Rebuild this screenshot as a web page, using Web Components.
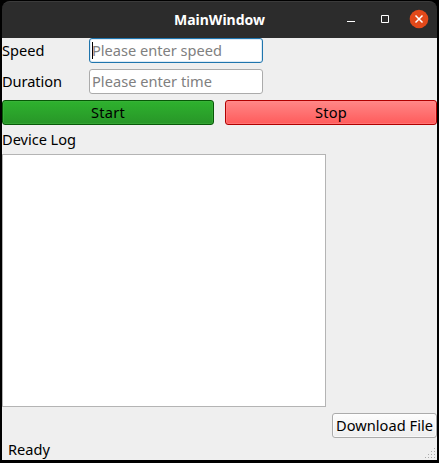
<!DOCTYPE html>
<html lang="en"><head><meta charset="utf-8"><title>MainWindow</title>
<style>html,body{margin:0;height:100%;background:#000;overflow:hidden}body{font:14.6px/20px "Noto Sans",sans-serif;color:#000}
main-window{--bg:#efefef}</style></head><body>
<main-window></main-window>
<script>
const define=(name,html,init)=>customElements.define(name,class extends HTMLElement{
  constructor(){super();this.attachShadow({mode:'open'}).innerHTML=html;}
  connectedCallback(){if(init)init.call(this,this.shadowRoot);}
});
// Single-line text, with tracking computed so that it spans the requested width.
define('ui-label','<style>:host{display:inline-block;white-space:nowrap;height:20px;line-height:var(--label-line,18px)}span{display:inline-block}</style><span><slot></slot></span>',function(root){
  const s=root.querySelector('span'),w=+this.getAttribute('span');
  if(w){const n=this.textContent.length,d=w-s.getBoundingClientRect().width;s.style.letterSpacing=(d/n)+'px';}
});
define('title-bar',`<style>
:host{--label-line:20px;display:grid;grid-template-columns:1fr auto;align-items:center;height:37px;box-sizing:border-box;background:#2c2c2c;border-top:1px solid #3b3b3b;border-radius:8px 8px 0 0;color:#fff;font-weight:700;font-size:14px}
.title{padding-left:172px;height:20px}svg{display:block}
</style><div class="title"><slot></slot></div>
<svg width="95" height="36" viewBox="342 2 95 36"><path d="M347 21.5h8" stroke="#fff"/><path d="M381.5 15.5h7v7h-7z" fill="none" stroke="#fff"/><circle cx="419" cy="19" r="9.3" fill="#e2491a"/><path d="M415.5 15.5l7 7m0-7l-7 7" stroke="#fff" stroke-width="1.5"/></svg>`);
define('line-edit',`<style>
:host{display:flex;align-items:center;box-sizing:border-box;width:174px;height:25px;padding-left:2px;border:1px solid #ababab;border-radius:3px;background:#fff;color:#808080}
:host([focused]){border-color:#1f75ad;box-shadow:inset 0 0 0 1px #dceaf5}
i{width:1px;height:17px;margin-right:-1px;background:transparent}:host([focused]) i{background:#000}
</style><i></i><slot></slot>`);
define('push-button',`<style>
:host{display:flex;align-items:center;justify-content:center;box-sizing:border-box;height:25px;border:1px solid #ababab;border-radius:3px;background:linear-gradient(#fdfdfd,#eee);box-shadow:inset 0 0 0 1px #ffffff90}
:host([kind=start]){border-color:#075807;background:linear-gradient(#2eb22e,#289628);box-shadow:inset 0 0 0 1px #42b34280}
:host([kind=stop]){border-color:#b00000;background:linear-gradient(#ff8787,#ff5b5b);box-shadow:inset 0 0 0 1px #ff8b8b80}
</style><slot></slot>`);
define('log-view','<style>:host{display:block;box-sizing:border-box;width:324px;height:253px;background:#fff;border:1px solid #b4b4b4}</style>');
define('status-bar',`<style>:host{display:flex;justify-content:space-between;align-items:flex-end;height:22px;padding-left:6px}svg{display:block}</style><slot></slot><svg width="12" height="12"></svg>`,function(root){
  let dots='';
  for(let r=0;r<4;r++)for(let c=3-r;c<4;c++)dots+=`<rect x="${c*3}" y="${r*3}" width="1" height="1" fill="#aaa"/>`;
  root.querySelector('svg').innerHTML=dots;
});
define('main-window',`<style>
:host{display:block;box-sizing:border-box;width:439px;height:463px;padding:1px 2px 2px;background:#000}
.client{display:flow-root;height:422px;background:var(--bg)}
.form{display:grid;grid-template-columns:87px 174px;row-gap:6px;align-items:center}
.actions{display:grid;grid-template-columns:1fr 1fr;gap:11px;margin-top:6px}
.log{height:29px;display:flex;align-items:center}
.download{display:flex;justify-content:flex-end;margin:6px 0 0}.download push-button{width:105px}
</style>
<title-bar><ui-label span="91">MainWindow</ui-label></title-bar>
<div class="client">
<div class="form"><ui-label span="42.5">Speed</ui-label><line-edit focused><ui-label span="130">Please enter speed</ui-label></line-edit>
<ui-label span="60">Duration</ui-label><line-edit><ui-label span="120">Please enter time</ui-label></line-edit></div>
<div class="actions"><push-button kind="start"><ui-label span="34">Start</ui-label></push-button><push-button kind="stop"><ui-label span="32">Stop</ui-label></push-button></div>
<div class="log"><ui-label span="74">Device Log</ui-label></div>
<log-view></log-view>
<div class="download"><push-button><ui-label span="97">Download File</ui-label></push-button></div>
<status-bar><ui-label span="42">Ready</ui-label></status-bar>
</div>`);
</script></body></html>
